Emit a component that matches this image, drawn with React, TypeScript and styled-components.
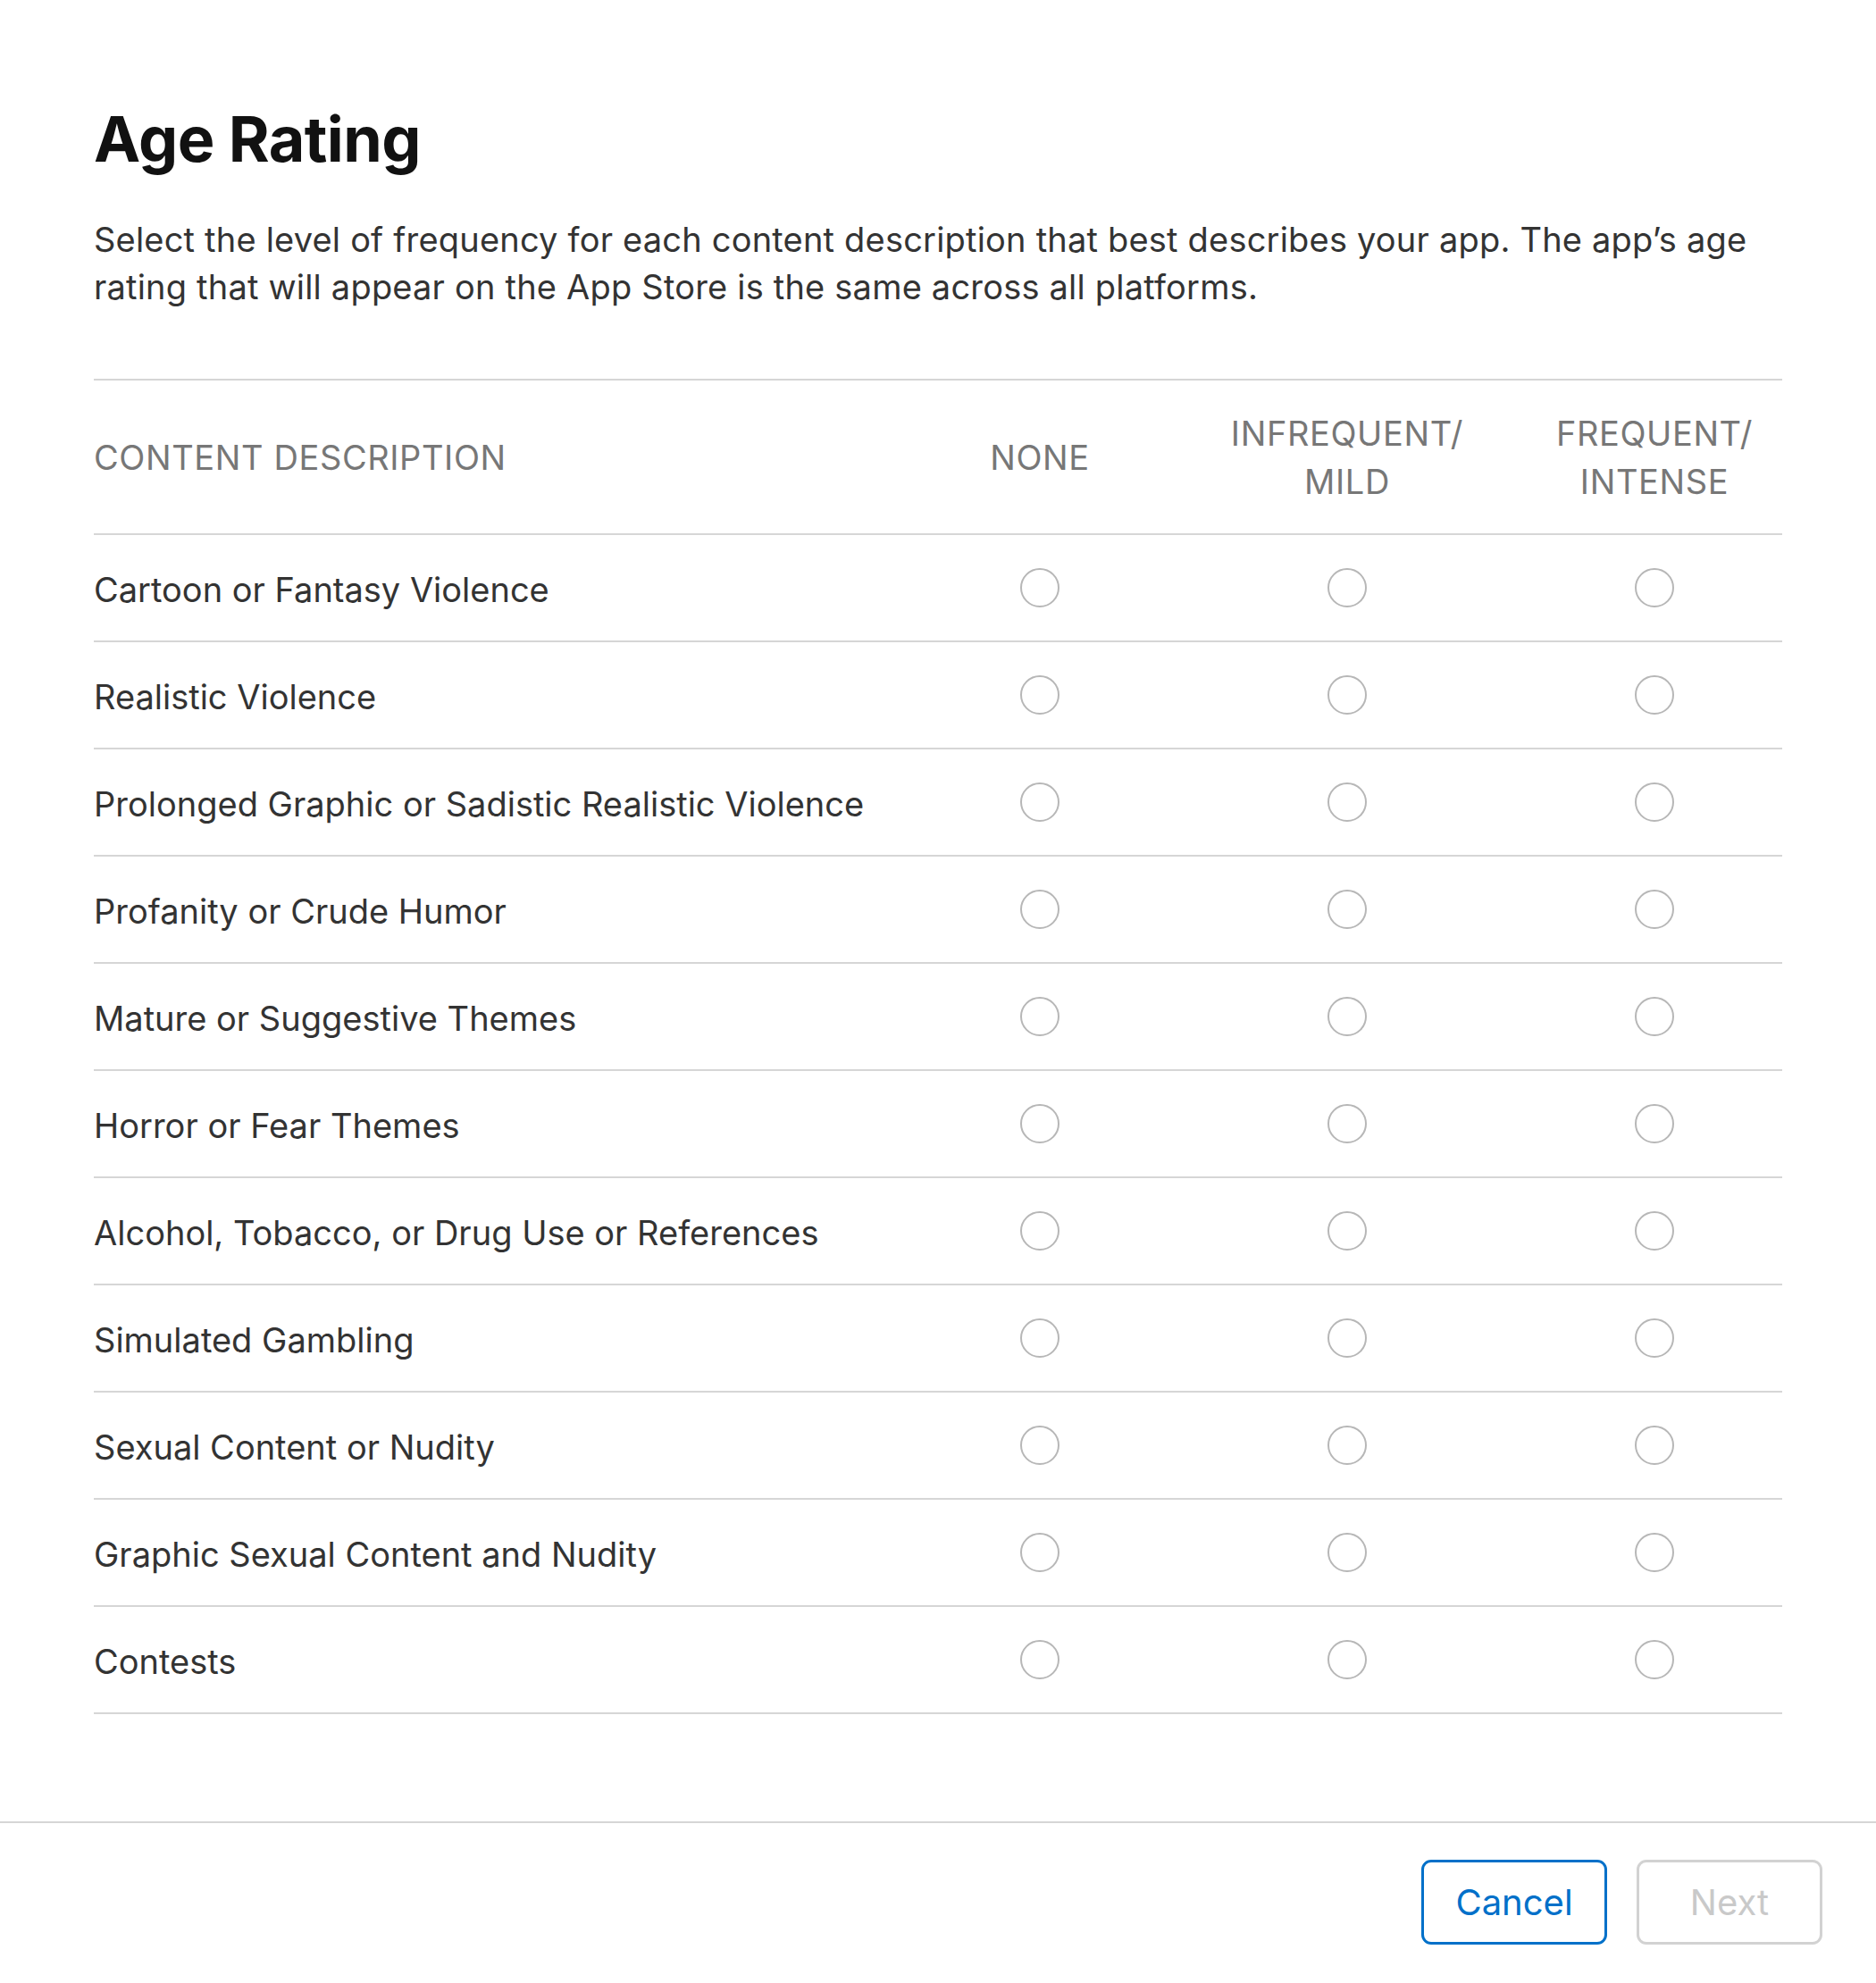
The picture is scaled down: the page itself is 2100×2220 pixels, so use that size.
import React from "react";
import styled, { createGlobalStyle } from "styled-components";

const GlobalStyle = createGlobalStyle`
  html, body {
    margin: 0;
    padding: 0;
    background: #ffffff;
  }
  body {
    font-family: Inter, "Noto Sans", "Liberation Sans", sans-serif;
    color: #333333;
    -webkit-font-smoothing: antialiased;
  }
  * { box-sizing: border-box; }
`;

const Page = styled.div`
  width: 2100px;
  min-height: 2220px;
  display: flex;
  flex-direction: column;
  background: #fff;
`;

const Content = styled.main`
  padding: 120px 105px 0 105px;
  display: flex;
  flex-direction: column;
`;

const Title = styled.h1`
  margin: 0;
  font-size: 70px;
  line-height: 72px;
  font-weight: 700;
  color: #111111;
  letter-spacing: -0.6px;
`;

const Description = styled.p`
  margin: 50px 0 0 0;
  font-size: 38px;
  line-height: 53px;
  font-weight: 400;
  letter-spacing: 0.2px;
  color: #333333;
`;

const Table = styled.div`
  margin-top: 76px;
  border-top: 2px solid #d6d6d6;
  display: flex;
  flex-direction: column;
`;

const Row = styled.div<{ $header?: boolean }>`
  display: grid;
  grid-template-columns: minmax(0, 1fr) 974px;
  align-items: center;
  height: ${(p) => (p.$header ? "173px" : "120px")};
  border-bottom: 2px solid #d6d6d6;
`;

const Levels = styled.div`
  display: grid;
  grid-template-columns: repeat(3, 286px);
  column-gap: 58px;
  align-items: center;
`;

const HeadCell = styled.div<{ $center?: boolean }>`
  font-size: 38px;
  line-height: 54px;
  font-weight: 400;
  color: #777777;
  text-transform: uppercase;
  letter-spacing: 0.6px;
  text-align: ${(p) => (p.$center ? "center" : "left")};
`;

const Label = styled.div`
  font-size: 38px;
  line-height: 53px;
  color: #333333;
  padding-top: 4px;
`;

const RadioCell = styled.div`
  display: flex;
  justify-content: center;
  align-items: center;
`;

const Radio = styled.input.attrs({ type: "radio" })`
  appearance: none;
  -webkit-appearance: none;
  margin: 0;
  width: 44px;
  height: 44px;
  border-radius: 50%;
  border: 2px solid #b7b7b7;
  background: #fff;
  cursor: pointer;
`;

const Footer = styled.footer`
  margin-top: 120px;
  border-top: 2px solid #d6d6d6;
  padding: 41px 60px 0 0;
  display: flex;
  justify-content: flex-end;
  gap: 33px;
`;

const Button = styled.button<{ $primary?: boolean }>`
  width: 208px;
  height: 95px;
  border-radius: 11px;
  background: #fff;
  font-family: Inter, "Noto Sans", "Liberation Sans", sans-serif;
  font-size: 40px;
  font-weight: 400;
  border: 3px solid ${(p) => (p.$primary ? "#0070c9" : "#d2d2d2")};
  color: ${(p) => (p.$primary ? "#0070c9" : "#c9c9c9")};
  cursor: ${(p) => (p.$primary ? "pointer" : "default")};
`;

const items = [
  "Cartoon or Fantasy Violence",
  "Realistic Violence",
  "Prolonged Graphic or Sadistic Realistic Violence",
  "Profanity or Crude Humor",
  "Mature or Suggestive Themes",
  "Horror or Fear Themes",
  "Alcohol, Tobacco, or Drug Use or References",
  "Simulated Gambling",
  "Sexual Content or Nudity",
  "Graphic Sexual Content and Nudity",
  "Contests",
];

const levels = ["none", "mild", "intense"];

export default function App() {
  return (
    <Page>
      <GlobalStyle />
      <Content>
        <Title>Age Rating</Title>
        <Description>
          Select the level of frequency for each content description that best describes your app. The app’s age
          rating that will appear on the App Store is the same across all platforms.
        </Description>
        <Table>
          <Row $header>
            <HeadCell>Content Description</HeadCell>
            <Levels>
              <HeadCell $center>None</HeadCell>
              <HeadCell $center>
                Infrequent/
                <br />
                Mild
              </HeadCell>
              <HeadCell $center>
                Frequent/
                <br />
                Intense
              </HeadCell>
            </Levels>
          </Row>
          {items.map((item, i) => (
            <Row key={item}>
              <Label>{item}</Label>
              <Levels>
                {levels.map((lv) => (
                  <RadioCell key={lv}>
                    <Radio name={`row-${i}`} value={lv} aria-label={`${item}: ${lv}`} />
                  </RadioCell>
                ))}
              </Levels>
            </Row>
          ))}
        </Table>
      </Content>
      <Footer>
        <Button $primary>Cancel</Button>
        <Button disabled>Next</Button>
      </Footer>
    </Page>
  );
}
